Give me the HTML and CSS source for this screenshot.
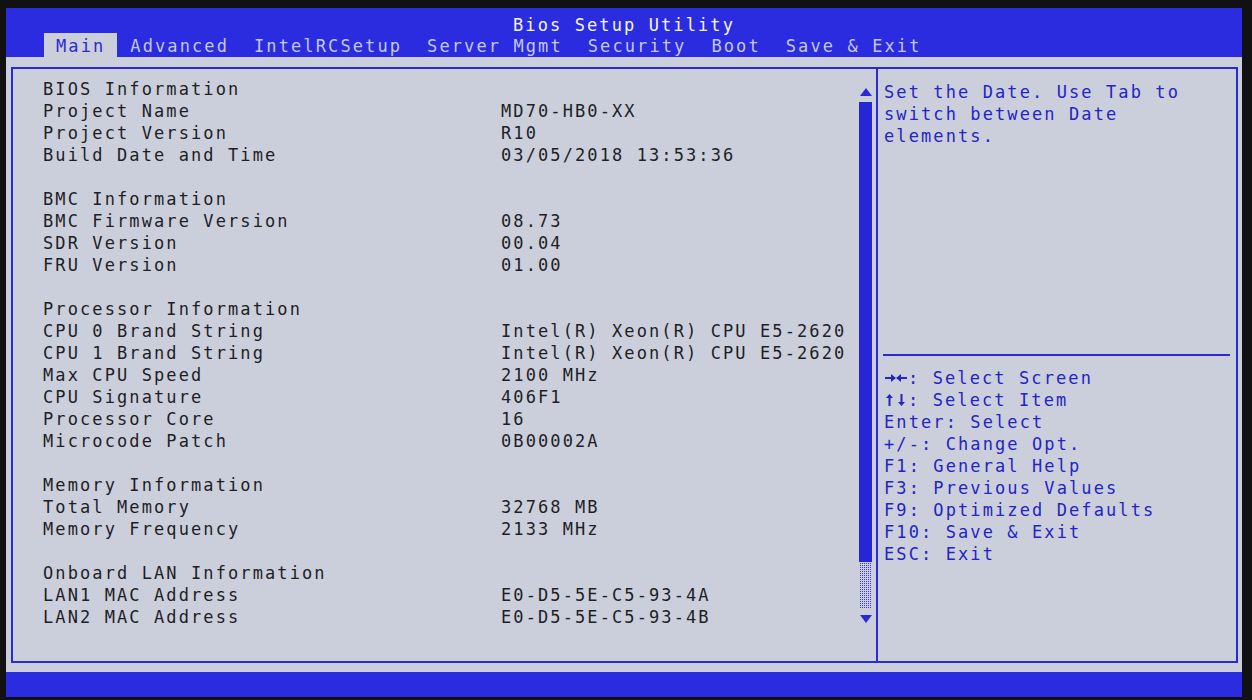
FILE: index.html
```html
<!DOCTYPE html>
<html lang="en">
<head>
<meta charset="utf-8">
<title>Bios Setup Utility</title>
<link rel="stylesheet" href="styles.css">
</head>
<body>
<div class="screen">
  <header class="top">
    <div class="title">Bios Setup Utility</div>
    <nav class="tabs">
      <span class="tab active">Main</span>
      <span class="tab">Advanced</span>
      <span class="tab">IntelRCSetup</span>
      <span class="tab">Server Mgmt</span>
      <span class="tab">Security</span>
      <span class="tab">Boot</span>
      <span class="tab">Save &amp; Exit</span>
    </nav>
  </header>
  <main class="body">
    <div class="frame">
      <section class="left">
        <div class="info">
          <div class="row"><span class="lbl">BIOS Information</span><span></span></div>
          <div class="row"><span class="lbl">Project Name</span><span>MD70-HB0-XX</span></div>
          <div class="row"><span class="lbl">Project Version</span><span>R10</span></div>
          <div class="row"><span class="lbl">Build Date and Time</span><span>03/05/2018 13:53:36</span></div>
          <div class="row blank"></div>
          <div class="row"><span class="lbl">BMC Information</span><span></span></div>
          <div class="row"><span class="lbl">BMC Firmware Version</span><span>08.73</span></div>
          <div class="row"><span class="lbl">SDR Version</span><span>00.04</span></div>
          <div class="row"><span class="lbl">FRU Version</span><span>01.00</span></div>
          <div class="row blank"></div>
          <div class="row"><span class="lbl">Processor Information</span><span></span></div>
          <div class="row"><span class="lbl">CPU 0 Brand String</span><span>Intel(R) Xeon(R) CPU E5-2620</span></div>
          <div class="row"><span class="lbl">CPU 1 Brand String</span><span>Intel(R) Xeon(R) CPU E5-2620</span></div>
          <div class="row"><span class="lbl">Max CPU Speed</span><span>2100 MHz</span></div>
          <div class="row"><span class="lbl">CPU Signature</span><span>406F1</span></div>
          <div class="row"><span class="lbl">Processor Core</span><span>16</span></div>
          <div class="row"><span class="lbl">Microcode Patch</span><span>0B00002A</span></div>
          <div class="row blank"></div>
          <div class="row"><span class="lbl">Memory Information</span><span></span></div>
          <div class="row"><span class="lbl">Total Memory</span><span>32768 MB</span></div>
          <div class="row"><span class="lbl">Memory Frequency</span><span>2133 MHz</span></div>
          <div class="row blank"></div>
          <div class="row"><span class="lbl">Onboard LAN Information</span><span></span></div>
          <div class="row"><span class="lbl">LAN1 MAC Address</span><span>E0-D5-5E-C5-93-4A</span></div>
          <div class="row"><span class="lbl">LAN2 MAC Address</span><span>E0-D5-5E-C5-93-4B</span></div>
        </div>
        <div class="scroll">
          <div class="arrow up"></div>
          <div class="thumb"></div>
          <div class="track"></div>
          <div class="arrow down"></div>
        </div>
      </section>
      <aside class="right">
        <div class="help">
          <div>Set the Date. Use Tab to</div>
          <div>switch between Date</div>
          <div>elements.</div>
        </div>
        <div class="sep"></div>
        <div class="keys">
          <div><svg class="ar" viewBox="0 0 24 14" width="24" height="14"><path d="M1 6h6V3l5 4-5 4V8H1z M23 6h-6V3l-5 4 5 4V8h6z"/></svg>: Select Screen</div>
          <div><svg class="ar" viewBox="0 0 24 14" width="24" height="14"><path d="M2 5l3.5-4 3.5 4H6.5v8h-2V5z M14 9l3.5 4 3.5-4h-2.5V1h-2v8z"/></svg>: Select Item</div>
          <div>Enter: Select</div>
          <div>+/-: Change Opt.</div>
          <div>F1: General Help</div>
          <div>F3: Previous Values</div>
          <div>F9: Optimized Defaults</div>
          <div>F10: Save &amp; Exit</div>
          <div>ESC: Exit</div>
        </div>
      </aside>
    </div>
  </main>
  <footer class="bottom"></footer>
</div>
</body>
</html>
```

FILE: styles.css
```css
html, body {
  margin: 0;
  padding: 0;
  background: #111114;
  height: 700px;
  overflow: hidden;
}

.screen {
  margin: 8px 10px 0 6px;
  width: 1236px;
  height: 689px;
  display: flex;
  flex-direction: column;
  font-family: "DejaVu Sans Mono", "Liberation Mono", monospace;
  font-size: 17px;
  letter-spacing: 2.1px;
}

.top {
  height: 49px;
  background: #2b2be0;
  display: flex;
  flex-direction: column;
  box-sizing: border-box;
  padding-top: 8px;
}

.title {
  height: 17px;
  line-height: 18px;
  text-align: center;
  color: #f4f4ff;
}

.tabs {
  display: flex;
  gap: 1px;
  height: 24px;
  padding-left: 38px;
}

.tab {
  padding: 2px 12px 0;
  line-height: 22px;
  color: #c3c8e6;
}

.tab.active {
  background: #cbcfdb;
  color: #2a2ad0;
}

.body {
  flex: 1;
  background: #cbcfdb;
  box-sizing: border-box;
  padding: 10px 4px 9px 5px;
  display: flex;
}

.frame {
  flex: 1;
  border: 2px solid #2a2ad4;
  display: flex;
}

.left {
  width: 863px;
  display: flex;
}

.info {
  flex: 1;
  padding: 9px 0 0 30px;
  color: #1e1e26;
}

.row {
  display: grid;
  grid-template-columns: 458px 1fr;
  height: 22px;
  line-height: 22px;
  white-space: pre;
}

.scroll {
  width: 13px;
  margin-right: 4px;
  padding-top: 19px;
  display: flex;
  flex-direction: column;
  align-items: center;
}

.arrow {
  width: 0;
  height: 0;
  border-left: 6px solid transparent;
  border-right: 6px solid transparent;
}

.arrow.up {
  border-bottom: 8px solid #2a2ad4;
  margin-bottom: 6px;
}

.arrow.down {
  border-top: 8px solid #2a2ad4;
  margin-top: 7px;
}

.thumb {
  width: 13px;
  height: 460px;
  background: #2626d6;
}

.track {
  width: 11px;
  height: 46px;
  background-image:
    linear-gradient(90deg, transparent 50%, #cbcfdb 50%),
    linear-gradient(0deg, #3a3ad0 50%, transparent 50%);
  background-size: 2px 2px, 2px 2px;
}

.right {
  flex: 1;
  border-left: 2px solid #2a2ad4;
  color: #2424c4;
  display: flex;
  flex-direction: column;
}

.help {
  height: 285px;
  box-sizing: border-box;
  padding: 12px 0 0 6px;
  line-height: 22px;
}

.sep {
  height: 2px;
  background: #2a2ad4;
  margin: 0 6px 0 5px;
}

.keys {
  padding: 11px 0 0 6px;
  line-height: 22px;
}

.ar {
  display: inline-block;
  vertical-align: -1px;
  fill: currentColor;
}

.bottom {
  height: 25px;
  background: #2b2be0;
}
```
